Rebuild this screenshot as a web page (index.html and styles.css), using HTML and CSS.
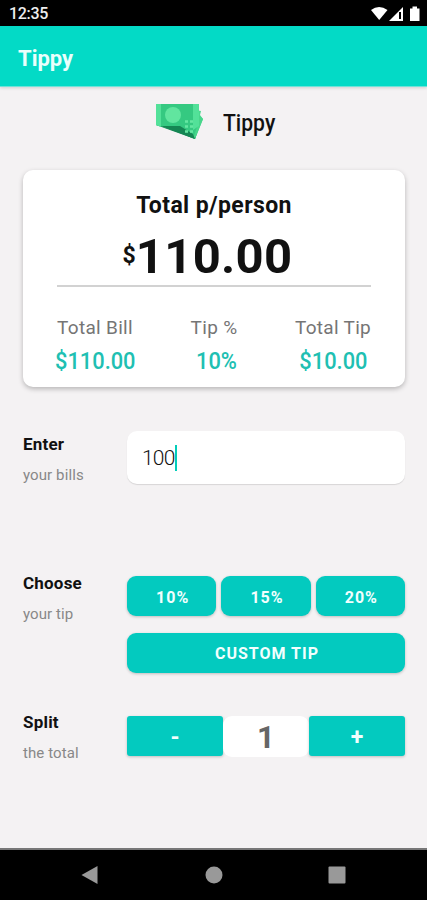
FILE: index.html
```html
<!DOCTYPE html>
<html lang="en">
<head>
    <meta charset="UTF-8">
    <meta name="viewport" content="width=device-width, initial-scale=1.0">
    <title>Tippy</title>
    <link rel="stylesheet" href="styles.css">
</head>
<body>
    <div class="status">
        <span class="time">12:35</span>
        <svg class="status-icons" width="50" height="16" viewBox="0 0 50 16">
            <path d="M0 4Q8 -2 16.500 4L8.200 14Z" fill="#fff"/>
            <path d="M18 15L32 1V15Z" fill="#fff"/>
            <path d="M29 6V13" stroke="#000" stroke-width="2"/>
            <path d="M39 2.500H41.500V0.500H46V2.500H48.500V15H39Z" fill="#fff"/>
        </svg>
    </div>
    <header class="appbar">
        <h1 class="title">Tippy</h1>
    </header>
    <main class="content">
        <div class="brand">
            <svg class="money" width="49" height="38" viewBox="0 0 49 38">
                <path d="M36 6L46 8L45 12L48 16L40 36L30 32Z" fill="#4bd98f"/>
                <path d="M1 22L40 36L46 17L40 10Z" fill="#158653"/>
                <path d="M34 28L44 12L48 16L40 36L36 34Z" fill="#48d68b"/>
                <path d="M1 1H43V21L39 33L1 22Z" fill="#35c981"/>
                <path d="M6 23L40 36L38 31L25 23Z" fill="#158653"/>
                <path d="M1 1H6V24L1 22ZM38 1H44V23L38 27Z" fill="#53e199"/>
                <circle cx="18" cy="12" r="8" fill="#61e59f"/>
                <path d="M30 18.500H33M35 18.500H38M30 23.500H33M35 23.500H38M30 28.500H33M35 28.500H38" stroke="#65e7a2" stroke-width="2.500"/>
            </svg>
            <span class="brand-name">Tippy</span>
        </div>
        <section class="card">
            <h2 class="card-title">Total p/person</h2>
            <div class="amount"><span class="dollar">$</span><span class="big">110.00</span></div>
            <div class="summary">
                <div class="item">
                    <span class="label">Total Bill</span>
                    <span class="value">$110.00</span>
                </div>
                <div class="item middle">
                    <span class="label">Tip %</span>
                    <span class="value">10%</span>
                </div>
                <div class="item">
                    <span class="label">Total Tip</span>
                    <span class="value">$10.00</span>
                </div>
            </div>
        </section>
        <section class="row enter">
            <div class="name">
                <h3>Enter</h3>
                <p>your bills</p>
            </div>
            <div class="input"><span class="typed">100</span><span class="cursor"></span></div>
        </section>
        <section class="row choose">
            <div class="name">
                <h3>Choose</h3>
                <p>your tip</p>
            </div>
            <div class="tips">
                <button class="btn">10%</button>
                <button class="btn">15%</button>
                <button class="btn">20%</button>
                <button class="btn custom">CUSTOM TIP</button>
            </div>
        </section>
        <section class="row split">
            <div class="name">
                <h3>Split</h3>
                <p>the total</p>
            </div>
            <div class="counter">
                <button class="btn step">-</button>
                <span class="count">1</span>
                <button class="btn step">+</button>
            </div>
        </section>
    </main>
    <nav class="navbar">
        <svg width="18" height="20" viewBox="0 0 18 20"><path d="M0.500 10L16.500 1V19Z" fill="#999"/></svg>
        <svg width="18" height="18" viewBox="0 0 18 18"><circle cx="9" cy="9" r="8.500" fill="#999"/></svg>
        <svg width="18" height="18" viewBox="0 0 18 18"><rect x="0.500" y="0.500" width="17" height="17" rx="1" fill="#999"/></svg>
    </nav>
</body>
</html>
```

FILE: styles.css
```css
*{
    margin: 0px;
    box-sizing: border-box;
}
body{
    height: 900px;
    display: flex; flex-direction: column;
    background: #f4f2f3;
    font-family: Roboto, sans-serif;
    color: #111;
    overflow: hidden;
}
.status{
    height: 26px;
    padding: 0 6px 0 9px;
    display: flex; justify-content: space-between;
    background: black; color: #eee;
}
.time{
    font-size: 16px; line-height: 28px; font-weight: 500;
    letter-spacing: -0.3px;
}
.status-icons{
    margin-top: 6px;
}
.appbar{
    height: 61px;
    padding-left: 18px;
    display: flex; align-items: center;
    background: #03dac6; color: #e9fffc;
    border-bottom: 1px solid #70e2d8;
    box-shadow: 0 1px 3px rgba(0, 0, 0, 0.15);
}
.title{
    font-size: 22px; line-height: 26px; font-weight: 700;
    padding-top: 5px;
}
.content{
    flex: 1;
    padding: 16px 22px 0 23px;
}
.brand{
    height: 67px;
    padding-left: 132px;
    display: flex; align-items: flex-start; gap: 19px;
}
.brand-name{
    font-size: 24px; line-height: 27px; font-weight: 500;
    margin-top: 7px;
    transform: scaleX(0.88); transform-origin: left;
}
.card{
    height: 217px;
    padding: 22px 34px 0;
    background: white;
    border-radius: 10px;
    box-shadow: 0 2px 5px rgba(0, 0, 0, 0.25);
}
.card-title{
    font-size: 23px; line-height: 27px; font-weight: 700;
    letter-spacing: 0.4px;
    text-align: center;
}
.amount{
    height: 68px;
    padding-right: 13px;
    display: flex; justify-content: center; align-items: flex-start;
    border-bottom: 2px solid #d2d2d2;
}
.dollar{
    font-size: 23px; line-height: 27px; font-weight: 700;
    margin-top: 23px;
}
.big{
    font-size: 49px; line-height: 58px; font-weight: 700;
    letter-spacing: 0.3px;
    margin-top: 9px;
}
.summary{
    display: flex; justify-content: space-between;
    padding-top: 27px;
}
.item{
    display: flex; flex-direction: column; align-items: center;
    width: 76px;
}
.middle{
    width: auto;
    align-items: flex-end;
}
.label{
    font-size: 19px; line-height: 27px;
    letter-spacing: 0.3px;
    white-space: nowrap;
    color: #757575;
}
.value{
    font-size: 24px; line-height: 27px; font-weight: 500;
    margin-top: 7px;
    color: #20bfb2;
    transform: scaleX(0.91);
}
.middle .value{
    transform-origin: right;
}
.row{
    display: grid; grid-template-columns: 104px 1fr;
}
.enter{
    margin-top: 44px;
}
.name h3{
    font-size: 17px; line-height: 22px; font-weight: 700;
    letter-spacing: 0.2px;
}
.name p{
    font-size: 15px; line-height: 20px;
    margin-top: 10px;
    letter-spacing: 0.1px;
    color: #888;
}
.enter .name{
    padding-top: 2px;
}
.input{
    height: 53px;
    padding-left: 15px;
    display: flex; align-items: center;
    background: white;
    border-radius: 10px;
    box-shadow: 0 1px 1px rgba(0, 0, 0, 0.12);
}
.typed{
    font-size: 21px; line-height: 26px; font-weight: 300;
    letter-spacing: -0.8px;
}
.cursor{
    width: 2px; height: 26px;
    background: #03cdb9;
}
.choose{
    margin-top: 86px;
}
.choose .name{
    padding-top: 1px;
}
.tips{
    display: grid; grid-template-columns: repeat(3, 1fr);
    column-gap: 5px; row-gap: 17px;
    padding-top: 5px;
}
.btn{
    height: 40px;
    border: none; border-radius: 9px;
    background: #03cabf; color: #f2fffe;
    font-family: inherit; font-size: 16px; font-weight: 700;
    letter-spacing: 1px;
    padding: 2px 0 0 2px;
    box-shadow: 0 1px 3px rgba(0, 0, 0, 0.22);
}
.custom{
    padding-top: 1px;
    grid-column: 1 / 4;
}
.split{
    margin-top: 38px;
}
.counter{
    display: grid; grid-template-columns: 96px 1fr 96px;
    padding-top: 5px;
}
.step{
    padding: 3px 0 0;
    border-radius: 3px;
    font-size: 23px;
    letter-spacing: 0;
}
.count{
    height: 41px;
    background: white;
    border-radius: 9px;
    font-size: 31px; line-height: 43px; font-weight: 700;
    text-align: center;
    color: #666;
}
.navbar{
    height: 52px;
    padding: 0 81px;
    display: flex; justify-content: space-between; align-items: center;
    background: black;
    border-top: 2px solid #777;
}
```
